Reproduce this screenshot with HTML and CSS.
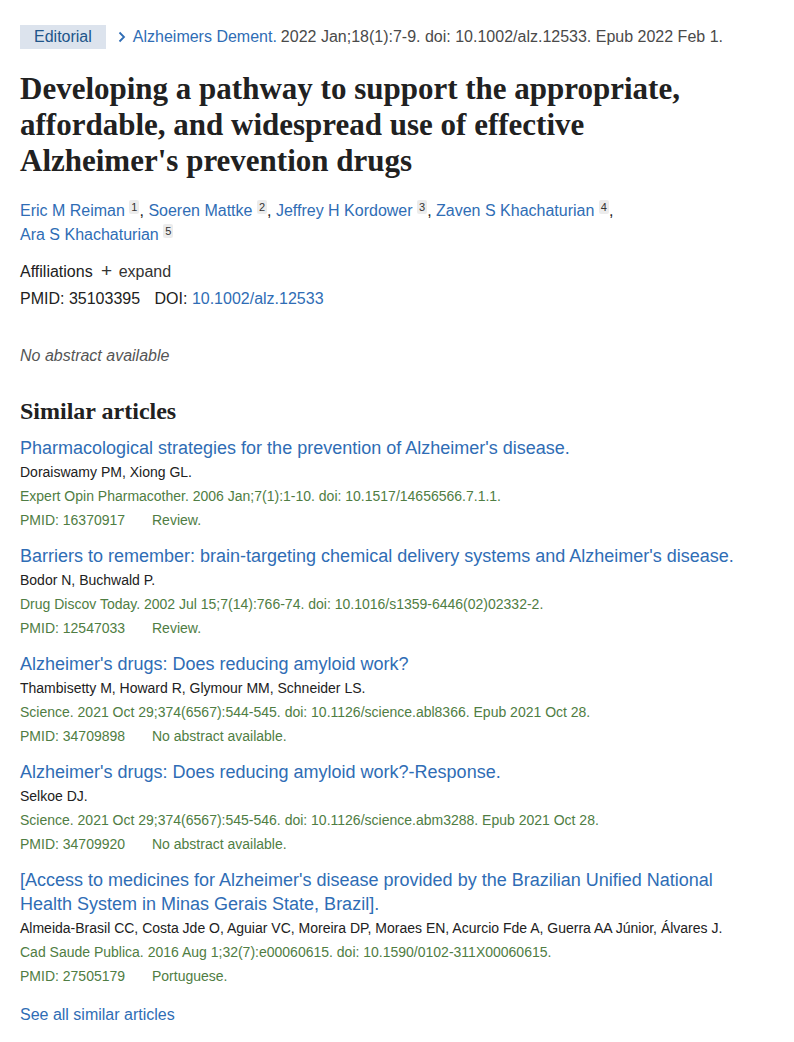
FILE: index.html
```html
<!DOCTYPE html>
<html>
<head>
<meta charset="utf-8">
<link rel="stylesheet" href="styles.css">
</head>
<body>
<main class="page">
  <div class="header-line">
    <span class="badge">Editorial</span>
    <svg class="chev" width="8" height="12" viewBox="0 0 8 12"><path d="M1.5 1.5 L6 6 L1.5 10.5" fill="none" stroke="#2f6db5" stroke-width="1.8"/></svg>
    <a class="link journal">Alzheimers Dement.</a>
    <span class="cite">2022 Jan;18(1):7-9. doi: 10.1002/alz.12533. Epub 2022 Feb 1.</span>
  </div>
  <h1 class="title">Developing a pathway to support the appropriate, affordable, and widespread use of effective Alzheimer's prevention drugs</h1>
  <div class="authors">
    <a class="link">Eric M Reiman</a> <sup class="sup">1</sup>, <a class="link">Soeren Mattke</a> <sup class="sup">2</sup>, <a class="link">Jeffrey H Kordower</a> <sup class="sup">3</sup>, <a class="link">Zaven S Khachaturian</a> <sup class="sup">4</sup>,<br>
    <a class="link">Ara S Khachaturian</a> <sup class="sup">5</sup>
  </div>
  <div class="affil">Affiliations <span class="plus">+</span> <span class="expand">expand</span></div>
  <div class="ids">PMID: 35103395 <span class="doi-label">DOI:</span> <a class="link">10.1002/alz.12533</a></div>
  <p class="noabs">No abstract available</p>
  <h2 class="sim-h">Similar articles</h2>
  <ul class="sim-list">
    <li class="item">
      <a class="link item-title">Pharmacological strategies for the prevention of Alzheimer's disease.</a>
      <div class="item-authors">Doraiswamy PM, Xiong GL.</div>
      <div class="item-cite">Expert Opin Pharmacother. 2006 Jan;7(1):1-10. doi: 10.1517/14656566.7.1.1.</div>
      <div class="item-cite"><span class="pmid">PMID: 16370917</span>Review.</div>
    </li>
    <li class="item">
      <a class="link item-title">Barriers to remember: brain-targeting chemical delivery systems and Alzheimer's disease.</a>
      <div class="item-authors">Bodor N, Buchwald P.</div>
      <div class="item-cite">Drug Discov Today. 2002 Jul 15;7(14):766-74. doi: 10.1016/s1359-6446(02)02332-2.</div>
      <div class="item-cite"><span class="pmid">PMID: 12547033</span>Review.</div>
    </li>
    <li class="item">
      <a class="link item-title">Alzheimer's drugs: Does reducing amyloid work?</a>
      <div class="item-authors">Thambisetty M, Howard R, Glymour MM, Schneider LS.</div>
      <div class="item-cite">Science. 2021 Oct 29;374(6567):544-545. doi: 10.1126/science.abl8366. Epub 2021 Oct 28.</div>
      <div class="item-cite"><span class="pmid">PMID: 34709898</span>No abstract available.</div>
    </li>
    <li class="item">
      <a class="link item-title">Alzheimer's drugs: Does reducing amyloid work?-Response.</a>
      <div class="item-authors">Selkoe DJ.</div>
      <div class="item-cite">Science. 2021 Oct 29;374(6567):545-546. doi: 10.1126/science.abm3288. Epub 2021 Oct 28.</div>
      <div class="item-cite"><span class="pmid">PMID: 34709920</span>No abstract available.</div>
    </li>
    <li class="item">
      <a class="link item-title">[Access to medicines for Alzheimer's disease provided by the Brazilian Unified National Health System in Minas Gerais State, Brazil].</a>
      <div class="item-authors">Almeida-Brasil CC, Costa Jde O, Aguiar VC, Moreira DP, Moraes EN, Acurcio Fde A, Guerra AA Júnior, Álvares J.</div>
      <div class="item-cite">Cad Saude Publica. 2016 Aug 1;32(7):e00060615. doi: 10.1590/0102-311X00060615.</div>
      <div class="item-cite"><span class="pmid">PMID: 27505179</span>Portuguese.</div>
    </li>
  </ul>
  <a class="link see-all">See all similar articles</a>
</main>
</body>
</html>
```
FILE: styles.css
```css
* { box-sizing: border-box; }
html, body { margin: 0; padding: 0; background: #fff; }
body {
  font-family: "Liberation Sans", Arial, sans-serif;
  color: #212121;
}
.page {
  padding: 25px 20px 0 20px;
  width: 794px;
}
.link { color: #2f6db5; text-decoration: none; }
.header-line {
  display: flex;
  align-items: center;
  font-size: 16px;
  line-height: 24px;
  color: #4a4a4a;
  white-space: nowrap;
}
.badge {
  background: #dce3ed;
  color: #20558a;
  padding: 0 14px;
  height: 24px;
  line-height: 24px;
  margin-right: 12px;
}
.chev { margin-right: 7px; flex: none; }
.journal { margin-right: 4px; }
.title {
  font-family: "Liberation Serif", "Times New Roman", serif;
  font-weight: bold;
  font-size: 31px;
  line-height: 36px;
  color: #212121;
  margin: 22px 0 20px 0;
  max-width: 720px;
}
.authors {
  font-size: 16px;
  line-height: 24px;
  color: #212121;
}
.sup {
  font-size: 11px;
  vertical-align: 5px;
  line-height: 1;
  background: #ececec;
  color: #333;
  padding: 1px 2px;
  border-radius: 2px;
}
.affil {
  margin-top: 12px;
  font-size: 16px;
  line-height: 24px;
}
.plus { font-size: 19px; margin: 0 2px 0 4px; color: #333; }
.expand { color: #333; }
.ids {
  font-size: 16px;
  line-height: 24px;
  margin-top: 3px;
}
.doi-label { margin-left: 10px; }
.noabs {
  font-style: italic;
  color: #555;
  font-size: 16px;
  line-height: 24px;
  margin: 33px 0 0 0;
}
.sim-h {
  font-family: "Liberation Serif", "Times New Roman", serif;
  font-weight: bold;
  font-size: 24px;
  line-height: 30px;
  margin: 28px 0 10px 0;
  color: #212121;
}
.sim-list { list-style: none; margin: 0; padding: 0; max-width: 730px; }
.item { margin-bottom: 12px; }
.item-title {
  display: block;
  font-size: 18px;
  line-height: 24px;
}
.item-authors {
  font-size: 14px;
  line-height: 24px;
  color: #212121;
}
.item-cite {
  font-size: 14px;
  line-height: 24px;
  color: #4f7d43;
}
.pmid { display: inline-block; width: 132px; }
.see-all {
  display: block;
  margin-top: 15px;
  font-size: 16px;
  line-height: 24px;
}
```
